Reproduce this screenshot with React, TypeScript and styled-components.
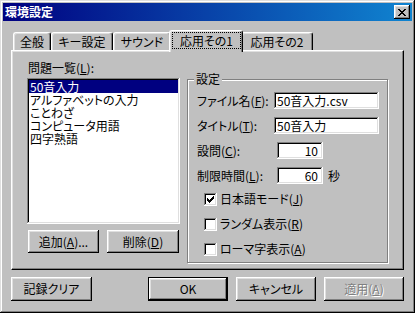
import React from 'react'
import styled, { createGlobalStyle, css } from 'styled-components'

const GlobalStyle = createGlobalStyle`
  html, body {
    margin: 0;
    padding: 0;
    background: #c0c0c0;
  }
  body {
    font-family: "Noto Sans CJK JP", "Noto Sans", sans-serif;
    font-size: 12px;
    font-feature-settings: "palt";
    color: #000;
  }
`

const raised = css`
  box-shadow: inset -1px -1px 0 #000, inset 1px 1px 0 #fff, inset -2px -2px 0 #808080,
    inset 2px 2px 0 #dfdfdf;
`

const sunken = css`
  box-shadow: inset -1px -1px 0 #fff, inset 1px 1px 0 #808080, inset -2px -2px 0 #dfdfdf,
    inset 2px 2px 0 #000;
`

const Window = styled.div`
  box-sizing: border-box;
  width: 415px;
  height: 313px;
  padding: 3px;
  background: #c0c0c0;
  display: flex;
  flex-direction: column;
  box-shadow: inset -1px -1px 0 #000, inset 1px 1px 0 #dfdfdf, inset -2px -2px 0 #808080,
    inset 2px 2px 0 #fff;
`

const TitleBar = styled.div`
  height: 18px;
  display: flex;
  align-items: center;
  justify-content: space-between;
  padding-left: 2px;
  background: linear-gradient(to right, #000080, #1084d0);
  color: #fff;
  font-weight: 700;
  line-height: 14px;
`

const CloseButton = styled.div`
  box-sizing: border-box;
  width: 16px;
  height: 14px;
  margin-right: 2px;
  background: #c0c0c0;
  display: flex;
  align-items: center;
  justify-content: center;
  ${raised}
`

const Body = styled.div`
  flex: 1;
  padding: 9px 8px 0 8px;
  display: flex;
  flex-direction: column;
`

const TabRow = styled.div`
  height: 20px;
  display: flex;
  align-items: flex-end;
  padding-left: 2px;
`

const Tab = styled.div<{ $w: number; $active?: boolean }>`
  box-sizing: border-box;
  width: ${p => p.$w}px;
  height: 18px;
  display: flex;
  align-items: center;
  justify-content: center;
  line-height: 14px;
  background: #c0c0c0;
  border-top: 1px solid #fff;
  border-left: 1px solid #fff;
  border-right: 1px solid #000;
  border-radius: 3px 3px 0 0;
  box-shadow: inset -1px 0 0 #808080, inset 1px 1px 0 #dfdfdf;
  ${p =>
    p.$active &&
    css`
      position: relative;
      z-index: 2;
      width: ${p.$w + 4}px;
      height: 22px;
      margin: 0 -2px -2px;
      align-items: stretch;
    `}
`

const FocusLabel = styled.div`
  flex: 1;
  margin: 1px 1px 3px 2px;
  border: 1px dotted #000;
  display: flex;
  align-items: center;
  justify-content: center;
`

const Panel = styled.div`
  box-sizing: border-box;
  height: 220px;
  padding: 10px 15px 0 15px;
  display: flex;
  align-items: flex-start;
  gap: 7px;
  border-top: 1px solid #fff;
  border-left: 1px solid #fff;
  border-right: 1px solid #000;
  border-bottom: 1px solid #000;
  box-shadow: inset -1px -1px 0 #808080, inset 1px 1px 0 #dfdfdf;
`

const LeftColumn = styled.div`
  width: 153px;
  display: flex;
  flex-direction: column;
`

const FieldLabel = styled.div`
  height: 14px;
  line-height: 14px;
  margin-left: 1px;
  white-space: nowrap;
`

const ListBox = styled.div`
  box-sizing: border-box;
  height: 146px;
  margin-top: 3px;
  padding: 2px;
  background: #fff;
  ${sunken}
`

const ListItem = styled.div<{ $selected?: boolean }>`
  height: 13px;
  line-height: 13px;
  padding-left: 1px;
  white-space: nowrap;
  background: ${p => (p.$selected ? '#000080' : 'transparent')};
  color: ${p => (p.$selected ? '#fff' : '#000')};
`

const ListButtons = styled.div`
  margin-top: 6px;
  padding: 0 1px;
  display: flex;
  justify-content: space-between;
`

const Button = styled.button<{ $w: number; $h?: number; $default?: boolean }>`
  box-sizing: border-box;
  width: ${p => p.$w}px;
  height: ${p => p.$h ?? 24}px;
  padding: 0;
  border: none;
  background: #c0c0c0;
  font: inherit;
  line-height: 14px;
  color: #000;
  ${raised}
  ${p =>
    p.$default &&
    css`
      box-shadow: inset 0 0 0 1px #000, inset -2px -2px 0 #000, inset 2px 2px 0 #fff,
        inset -3px -3px 0 #808080, inset 3px 3px 0 #dfdfdf;
    `}
  &:disabled {
    color: #808080;
    text-shadow: 1px 1px 0 #fff;
  }
`

const GroupBox = styled.div`
  position: relative;
  box-sizing: border-box;
  width: 201px;
  height: 184px;
  margin-top: 18px;
  padding: 12px 0 0 9px;
  border: 1px solid #808080;
  box-shadow: 1px 1px 0 #fff, inset 1px 1px 0 #fff;
`

const Legend = styled.span`
  position: absolute;
  top: -8px;
  left: 6px;
  padding: 0 2px;
  line-height: 14px;
  background: #c0c0c0;
`

const Fields = styled.div`
  display: flex;
  flex-direction: column;
  gap: 8px;
`

const FieldRow = styled.div`
  height: 17px;
  display: flex;
  align-items: center;
`

const RowLabel = styled.span`
  width: 77px;
  white-space: nowrap;
  line-height: 14px;
`

const TextBox = styled.input<{ $w: number; $num?: boolean }>`
  box-sizing: border-box;
  width: ${p => p.$w}px;
  height: 17px;
  margin: 0 0 0 ${p => (p.$num ? 3 : 0)}px;
  padding: 0 ${p => (p.$num ? 5 : 3)}px 0 3px;
  border: none;
  outline: none;
  background: #fff;
  font: inherit;
  line-height: 13px;
  color: #000;
  text-align: ${p => (p.$num ? 'right' : 'left')};
  ${sunken}
`

const Unit = styled.span`
  margin-left: 5px;
  line-height: 14px;
`

const Checks = styled.div`
  margin: 8px 0 0 7px;
  display: flex;
  flex-direction: column;
  gap: 11px;
`

const CheckRow = styled.label`
  height: 14px;
  display: flex;
  align-items: center;
  gap: 3px;
  line-height: 14px;
  white-space: nowrap;
`

const CheckBox = styled.span`
  box-sizing: border-box;
  width: 13px;
  height: 13px;
  display: flex;
  align-items: center;
  justify-content: center;
  background: #fff;
  ${sunken}
`

const Footer = styled.div`
  margin-top: 7px;
  display: flex;
  gap: 8px;
`

const Spacer = styled.div`
  flex: 1;
`

const closeGlyph: [number, number, number][] = [
  [0, 0, 2], [6, 0, 2],
  [1, 1, 2], [5, 1, 2],
  [2, 2, 4],
  [3, 3, 2],
  [2, 4, 4],
  [1, 5, 2], [5, 5, 2],
  [0, 6, 2], [6, 6, 2],
]

function CloseIcon() {
  return (
    <svg width="8" height="7" viewBox="0 0 8 7" shapeRendering="crispEdges">
      {closeGlyph.map(([x, y, w], i) => (
        <rect key={i} x={x} y={y} width={w} height={1} fill="#000" />
      ))}
    </svg>
  )
}

function CheckMark() {
  return (
    <svg width="7" height="7" viewBox="0 0 7 7" shapeRendering="crispEdges">
      <path d="M6 0h1v3h-1v1h-1v1h-1v1h-1v1h-1v-1h-1v-1h-1v-3h1v1h1v1h1v-1h1v-1h1z" fill="#000" />
    </svg>
  )
}

const tabs = [
  { label: '全般', width: 38 },
  { label: 'キー設定', width: 62 },
  { label: 'サウンド', width: 58 },
  { label: '応用その1', width: 70, active: true },
  { label: '応用その2', width: 72 },
]

const problems = ['50音入力', 'アルファベットの入力', 'ことわざ', 'コンピュータ用語', '四字熟語']

const options = [
  { text: '日本語モード', key: 'J', checked: true },
  { text: 'ランダム表示', key: 'R', checked: false },
  { text: 'ローマ字表示', key: 'A', checked: false },
]

export default function App(): JSX.Element {
  return (
    <>
      <GlobalStyle />
      <Window>
        <TitleBar>
          <span>環境設定</span>
          <CloseButton>
            <CloseIcon />
          </CloseButton>
        </TitleBar>
        <Body>
          <TabRow>
            {tabs.map(t => (
              <Tab key={t.label} $w={t.width} $active={t.active}>
                {t.active ? <FocusLabel>{t.label}</FocusLabel> : t.label}
              </Tab>
            ))}
          </TabRow>
          <Panel>
            <LeftColumn>
              <FieldLabel>
                問題一覧(<u>L</u>):
              </FieldLabel>
              <ListBox>
                {problems.map((p, i) => (
                  <ListItem key={p} $selected={i === 0}>
                    {p}
                  </ListItem>
                ))}
              </ListBox>
              <ListButtons>
                <Button $w={71} $h={23}>
                  追加(<u>A</u>)...
                </Button>
                <Button $w={72} $h={23}>
                  削除(<u>D</u>)
                </Button>
              </ListButtons>
            </LeftColumn>
            <GroupBox>
              <Legend>設定</Legend>
              <Fields>
                <FieldRow>
                  <RowLabel>
                    ファイル名(<u>F</u>):
                  </RowLabel>
                  <TextBox $w={105} defaultValue="50音入力.csv" />
                </FieldRow>
                <FieldRow>
                  <RowLabel>
                    タイトル(<u>T</u>):
                  </RowLabel>
                  <TextBox $w={105} defaultValue="50音入力" />
                </FieldRow>
                <FieldRow>
                  <RowLabel>
                    設問(<u>C</u>):
                  </RowLabel>
                  <TextBox $w={46} $num defaultValue="10" />
                </FieldRow>
                <FieldRow>
                  <RowLabel>
                    制限時間(<u>L</u>):
                  </RowLabel>
                  <TextBox $w={46} $num defaultValue="60" />
                  <Unit>秒</Unit>
                </FieldRow>
              </Fields>
              <Checks>
                {options.map(o => (
                  <CheckRow key={o.text}>
                    <CheckBox>{o.checked && <CheckMark />}</CheckBox>
                    <span>
                      {o.text}(<u>{o.key}</u>)
                    </span>
                  </CheckRow>
                ))}
              </Checks>
            </GroupBox>
          </Panel>
          <Footer>
            <Button $w={81}>記録クリア</Button>
            <Spacer />
            <Button $w={80} $default>
              OK
            </Button>
            <Button $w={80}>キャンセル</Button>
            <Button $w={80} disabled>
              適用(<u>A</u>)
            </Button>
          </Footer>
        </Body>
      </Window>
    </>
  )
}
